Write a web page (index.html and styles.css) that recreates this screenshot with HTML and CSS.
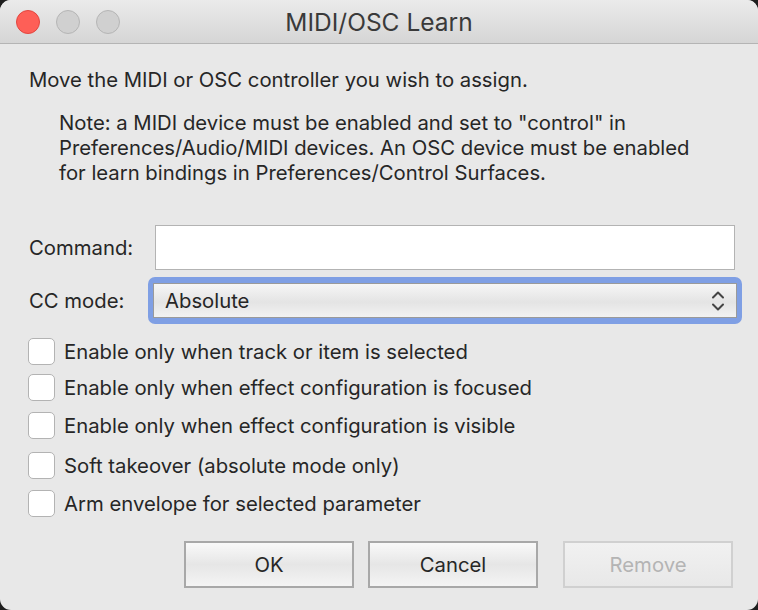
FILE: index.html
```html
<!DOCTYPE html>
<html>
<head>
<meta charset="utf-8">
<link rel="stylesheet" href="styles.css">
</head>
<body>
<div class="window">
  <div class="titlebar">
    <div class="lights">
      <span class="light red"></span>
      <span class="light gray"></span>
      <span class="light gray"></span>
    </div>
    <div class="title">MIDI/OSC Learn</div>
  </div>
  <div class="content">
    <p class="intro">Move the MIDI or OSC controller you wish to assign.</p>
    <p class="note">Note: a MIDI device must be enabled and set to "control" in Preferences/Audio/MIDI devices. An OSC device must be enabled for learn bindings in Preferences/Control Surfaces.</p>
    <div class="field cmd">
      <label class="flabel">Command:</label>
      <div class="textbox"></div>
    </div>
    <div class="field mode">
      <label class="flabel">CC mode:</label>
      <div class="ring">
        <div class="select">
          <span>Absolute</span>
          <svg class="chev" width="14" height="22" viewBox="0 0 14 22"><path d="M2 7.5 L7 2.5 L12 7.5 M2 14.5 L7 19.5 L12 14.5" fill="none" stroke="#444" stroke-width="2" stroke-linecap="round" stroke-linejoin="round"/></svg>
        </div>
      </div>
    </div>
    <div class="checks">
      <div class="check r1"><span class="box"></span><span>Enable only when track or item is selected</span></div>
      <div class="check r2"><span class="box"></span><span>Enable only when effect configuration is focused</span></div>
      <div class="check r3"><span class="box"></span><span>Enable only when effect configuration is visible</span></div>
      <div class="check r4"><span class="box"></span><span>Soft takeover (absolute mode only)</span></div>
      <div class="check r5"><span class="box"></span><span>Arm envelope for selected parameter</span></div>
    </div>
    <div class="buttons">
      <div class="btn">OK</div>
      <div class="btn">Cancel</div>
      <div class="btn disabled">Remove</div>
    </div>
  </div>
</div>
</body>
</html>
```
FILE: styles.css
```css
html, body {
  margin: 0;
  padding: 0;
  background: #1e1e1e;
}
body {
  width: 758px;
  height: 610px;
  overflow: hidden;
  font-family: "Inter", "Roboto", "Liberation Sans", sans-serif;
  color: #262626;
}
.window {
  width: 758px;
  height: 610px;
  border-radius: 11px;
  overflow: hidden;
  background: #e8e8e8;
  display: flex;
  flex-direction: column;
}
.titlebar {
  height: 43px;
  flex: none;
  border-bottom: 1px solid #b4b4b4;
  background: linear-gradient(#ebebeb, #d5d5d5);
  position: relative;
  display: flex;
  align-items: center;
  justify-content: center;
}
.lights {
  position: absolute;
  left: 16px;
  top: 10px;
  display: flex;
  gap: 16px;
}
.light {
  width: 24px;
  height: 24px;
  border-radius: 50%;
  box-sizing: border-box;
}
.red {
  background: #fe5f57;
  border: 1px solid #e2463f;
}
.gray {
  background: #d0d0d0;
  border: 1px solid #b5b5b5;
}
.title {
  font-size: 24.5px;
  color: #3a3a3a;
  margin-top: 1px;
}
.content {
  padding: 0 16px 0 29px;
  font-size: 20.3px;
}
.intro {
  margin: 24px 0 0 0;
  line-height: 24px;
}
.note {
  margin: 18px 0 0 30px;
  line-height: 25px;
  width: 640px;
}
.field {
  display: flex;
  align-items: center;
}
.cmd {
  margin-top: 40px;
  height: 45px;
}
.flabel {
  width: 126px;
  flex: none;
}
.textbox {
  flex: none;
  width: 580px;
  height: 45px;
  box-sizing: border-box;
  background: #fff;
  border: 1px solid #b3b3b3;
}
.mode {
  margin-top: 7px;
  height: 47px;
}
.ring {
  flex: none;
  margin-left: -7px;
  width: 594px;
  height: 47px;
  box-sizing: border-box;
  border-radius: 7px;
  background: #7f9fe4;
  padding: 6px 5px;
}
.select {
  height: 35px;
  box-sizing: border-box;
  border: 1px solid #9a9a9a;
  background: linear-gradient(#f6f6f6, #e4e4e4 55%, #f2f2f2);
  display: flex;
  align-items: center;
  justify-content: space-between;
  padding: 0 11px 0 11px;
}
.chev {
  display: block;
}
.checks {
  margin-top: 14px;
  display: flex;
  flex-direction: column;
}
.check {
  display: flex;
  align-items: center;
  height: 27px;
}
.r2 { margin-top: 9px; }
.r3 { margin-top: 11px; }
.r4 { margin-top: 13px; }
.r5 { margin-top: 11px; }
.box {
  width: 27px;
  height: 27px;
  box-sizing: border-box;
  border: 1px solid #b3b3b3;
  border-radius: 5px;
  background: #fff;
  margin-left: -1px;
  margin-right: 9px;
  flex: none;
}
.buttons {
  margin-top: 24px;
  display: flex;
  padding-left: 155px;
}
.btn {
  flex: none;
  width: 170px;
  height: 47px;
  box-sizing: border-box;
  border: 2px solid #a8a8a8;
  background: linear-gradient(#f9f9f9, #e6e6e6 50%, #f4f4f4);
  display: flex;
  align-items: center;
  justify-content: center;
  margin-right: 14px;
}
.btn.disabled {
  margin-left: 11px;
  border-color: #d0d0d0;
  color: #b4b4b4;
  background: linear-gradient(#f1f1f1, #e8e8e8);
}
```
